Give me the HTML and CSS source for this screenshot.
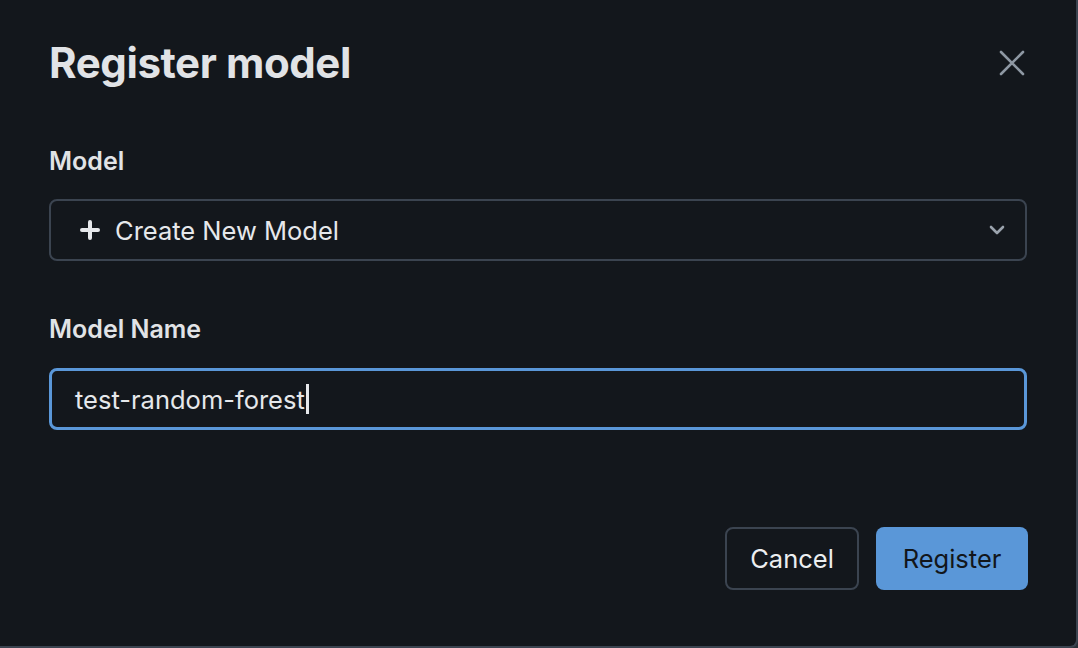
FILE: index.html
```html
<!DOCTYPE html>
<html lang="en">
<head>
<meta charset="utf-8">
<title>Register model</title>
<link rel="stylesheet" href="styles.css">
</head>
<body>
<div class="modal">
  <div class="header">
    <h1 class="title">Register model</h1>
    <button class="close" aria-label="Close">
      <svg width="26" height="26" viewBox="0 0 26 26"><path d="M2 2 L24 24 M24 2 L2 24" stroke="#8e98a3" stroke-width="2.6" stroke-linecap="round" fill="none"/></svg>
    </button>
  </div>
  <div class="field">
    <label class="label">Model</label>
    <div class="select">
      <span class="plus">
        <svg width="20" height="20" viewBox="0 0 20 20"><path d="M10 2 V18 M2 10 H18" stroke="#e6e8eb" stroke-width="4" stroke-linecap="round" fill="none"/></svg>
      </span>
      <span class="select-text">Create New Model</span>
      <span class="chevron">
        <svg width="16" height="12" viewBox="0 0 16 12"><path d="M2 3 L8 9 L14 3" stroke="#9aa3ad" stroke-width="2.6" stroke-linecap="round" stroke-linejoin="round" fill="none"/></svg>
      </span>
    </div>
  </div>
  <div class="field field-name">
    <label class="label">Model Name</label>
    <div class="input"><span class="input-text">test-random-forest</span><span class="caret"></span></div>
  </div>
  <div class="footer">
    <button class="btn btn-cancel">Cancel</button>
    <button class="btn btn-primary">Register</button>
  </div>
</div>
</body>
</html>
```

FILE: styles.css
```css
html, body {
  margin: 0;
  padding: 0;
  background: #2b3139;
}
body {
  font-family: Inter, "Noto Sans", "Liberation Sans", sans-serif;
  color: #e4e6e9;
}
.modal {
  box-sizing: border-box;
  width: 1078px;
  height: 648px;
  background: #13171c;
  border-right: 2px solid #3b4450;
  border-bottom: 2px solid #3b4450;
  border-bottom-right-radius: 8px;
  padding: 0 49px 0 49px;
  display: flex;
  flex-direction: column;
}
.header {
  display: flex;
  align-items: center;
  justify-content: space-between;
  height: 126px;
  margin-bottom: 20px;
}
.title {
  margin: 0;
  font-size: 42px;
  font-weight: 700;
  letter-spacing: -0.4px;
  color: #e1e3e6;
  margin-top: -2px;
}
.close {
  background: none;
  border: 0;
  padding: 0;
  margin-right: 2px;
  width: 26px;
  height: 26px;
  display: flex;
}
.field {
  display: flex;
  flex-direction: column;
}
.label {
  font-size: 25px;
  font-weight: 600;
  color: #e1e3e6;
  line-height: 30px;
  margin-bottom: 23px;
}
.select {
  box-sizing: border-box;
  height: 62px;
  border: 2px solid #3b4450;
  border-radius: 8px;
  display: flex;
  align-items: center;
  padding: 0 20px 0 29px;
}
.plus {
  display: flex;
  margin-right: 15px;
}
.select-text {
  flex: 1;
  font-size: 25.5px;
  color: #e6e8eb;
}
.chevron {
  display: flex;
}
.field-name {
  margin-top: 53px;
}
.field-name .label {
  margin-bottom: 24px;
}
.input {
  box-sizing: border-box;
  height: 62px;
  border: 3px solid #5a97d8;
  border-radius: 8px;
  display: flex;
  align-items: center;
  padding-left: 23px;
}
.input-text {
  font-size: 25.5px;
  color: #e6e8eb;
}
.caret {
  display: inline-block;
  width: 3px;
  height: 30px;
  background: #e6e8eb;
  margin-left: 1px;
}
.footer {
  display: flex;
  justify-content: flex-end;
  gap: 17px;
  margin-top: 97px;
  margin-right: -1px;
}
.btn {
  box-sizing: border-box;
  height: 63px;
  border-radius: 8px;
  font-family: Inter, "Noto Sans", "Liberation Sans", sans-serif;
  font-size: 25.5px;
  padding: 0;
}
.btn-cancel {
  width: 134px;
  background: #13171c;
  border: 2px solid #3b4450;
  color: #eceef0;
}
.btn-primary {
  width: 152px;
  background: #5a97d8;
  border: 0;
  color: #12161b;
}
```
